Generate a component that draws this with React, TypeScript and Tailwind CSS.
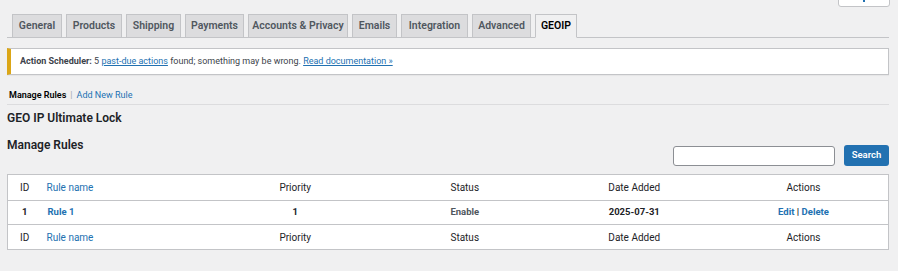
import React from "react";

const tabs = [
  { label: "General", w: "w-[50px]" },
  { label: "Products", w: "w-[56px]" },
  { label: "Shipping", w: "w-[55px]" },
  { label: "Payments", w: "w-[59px]" },
  { label: "Accounts & Privacy", w: "w-[100px]" },
  { label: "Emails", w: "w-[45px]" },
  { label: "Integration", w: "w-[67px]" },
  { label: "Advanced", w: "w-[59px]" },
];

function HeadRow({ top }: { top?: boolean }) {
  return (
    <tr className={top ? "h-[26px] border-b border-[#c3c4c7]" : "h-[25px]"}>
      <td className="text-center text-[#1d2327]">ID</td>
      <td className="pl-[5px] text-[#2271b1]">Rule name</td>
      <td className="text-center text-[#1d2327]">Priority</td>
      <td className="text-center text-[#1d2327]">Status</td>
      <td className="text-center text-[#1d2327]">Date Added</td>
      <td className="text-center text-[#1d2327]">Actions</td>
    </tr>
  );
}

export default function App() {
  return (
    <div
      className="min-h-[271px] bg-[#f0f0f1] pl-[7px] pr-[9px] text-[#3c434a]"
      style={{ fontFamily: 'Roboto, "Noto Sans", sans-serif' }}
    >
      {/* help tab peeking from the top */}
      <div className="flex justify-end">
        <div className="-mt-[20px] mr-[-1px] flex h-[27px] w-[52px] items-end justify-center rounded-b-[3px] border border-[#c3c4c7] bg-white pb-[4px]">
          <span className="h-[2px] w-[2px] bg-[#2271b1]" />
        </div>
      </div>

      {/* settings tabs */}
      <div className="mt-[7px] flex items-end gap-[4px] border-b border-[#c3c4c7] pl-[5px]">
        {tabs.map((t) => (
          <div
            key={t.label}
            className={`${t.w} -mb-px flex h-[24px] items-center justify-center whitespace-nowrap border border-[#c3c4c7] bg-[#dcdcde] text-[10.5px] font-semibold text-[#50575e]`}
          >
            {t.label}
          </div>
        ))}
        <div className="-mb-px flex h-[24px] w-[42px] items-center justify-center border border-[#c3c4c7] border-b-[#f0f0f1] bg-[#f0f0f1] text-[10.5px] font-semibold text-black">
          GEOIP
        </div>
      </div>

      {/* action scheduler notice */}
      <div className="mt-[10px] flex h-[27px] items-center border border-l-4 border-[#c3c4c7] border-l-[#dba617] bg-white pl-[9px] text-[9px] text-[#3c434a] shadow-[0_1px_1px_rgba(0,0,0,0.04)]">
        <span>
          <strong className="font-bold">Action Scheduler:</strong> 5{" "}
          <a className="text-[#2271b1] underline">past-due actions</a> found;
          something may be wrong.{" "}
          <a className="text-[#2271b1] underline">Read documentation »</a>
        </span>
      </div>

      {/* sub navigation */}
      <div className="mt-[14px] flex h-[16px] items-center border-b border-[#dcdcde] pb-[2px] pl-[2px] text-[9px]">
        <span className="font-semibold text-black">Manage Rules</span>
        <span className="mx-[4px] text-[#a7aaad]">|</span>
        <a className="text-[#2271b1]">Add New Rule</a>
      </div>

      <h1 className="mt-[5px] text-[12px] font-semibold leading-[16px] text-[#1d2327]">
        GEO IP Ultimate Lock
      </h1>
      <h2 className="mt-[11px] text-[12px] font-semibold leading-[16px] text-[#1d2327]">
        Manage Rules
      </h2>

      {/* search */}
      <div className="-mt-[8px] flex items-center justify-end gap-[9px]">
        <input
          className="h-[20px] w-[162px] rounded-[3px] border border-[#8c8f94] bg-white"
          type="text"
        />
        <button className="h-[21px] w-[45px] rounded-[3px] bg-[#2271b1] text-[9.5px] font-semibold text-white">
          Search
        </button>
      </div>

      {/* rules table */}
      <table className="mt-[8px] w-full table-fixed border border-[#c3c4c7] bg-white text-[10px]">
        <colgroup>
          <col className="w-[34px]" />
          <col className="w-[169px]" />
          <col />
          <col />
          <col />
          <col />
        </colgroup>
        <tbody>
          <HeadRow top />
          <tr className="h-[24px] border-b border-[#c3c4c7] text-[9.5px] font-bold">
            <td className="text-center text-[#1d2327]">1</td>
            <td className="pl-[6px] text-[#2271b1]">Rule 1</td>
            <td className="text-center text-[#1d2327]">1</td>
            <td className="text-center text-[#50575e]">Enable</td>
            <td className="text-center text-[#1d2327]">2025-07-31</td>
            <td className="text-center text-[#2271b1]">
              Edit <span className="text-[#1d2327]">|</span> Delete
            </td>
          </tr>
          <HeadRow />
        </tbody>
      </table>
    </div>
  );
}
